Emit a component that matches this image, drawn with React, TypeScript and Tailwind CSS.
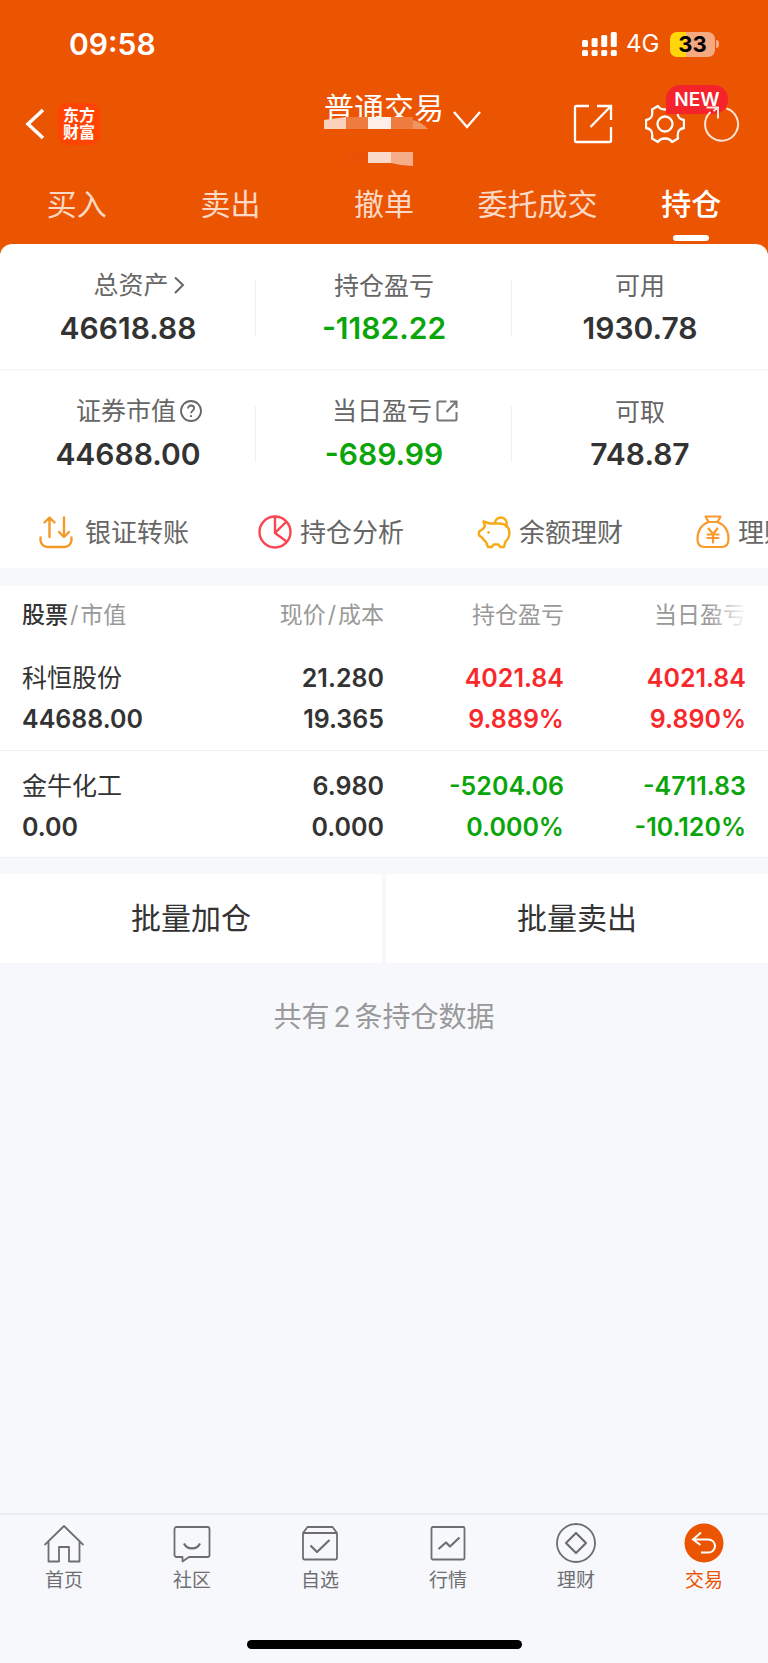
import type { ReactNode } from "react"
import { clsx } from "clsx"

type Tone = "up" | "down" | "plain"

const toneClass: Record<Tone, string> = {
  up: "text-[#f8282b]",
  down: "text-[#0aa50a]",
  plain: "text-[#333]",
}

const tabs = ["买入", "卖出", "撤单", "委托成交", "持仓"]

const summary: { label: string; value: string; tone: Tone; icon?: ReactNode }[][] = [
  [
    { label: "总资产", value: "46618.88", tone: "plain", icon: <ChevronRightIcon /> },
    { label: "持仓盈亏", value: "-1182.22", tone: "down" },
    { label: "可用", value: "1930.78", tone: "plain" },
  ],
  [
    { label: "证券市值", value: "44688.00", tone: "plain", icon: <HelpIcon /> },
    { label: "当日盈亏", value: "-689.99", tone: "down", icon: <SmallShareIcon /> },
    { label: "可取", value: "748.87", tone: "plain" },
  ],
]

const actions = [
  { label: "银证转账", icon: <TransferIcon />, gap: "gap-3" },
  { label: "持仓分析", icon: <PieIcon />, gap: "gap-2" },
  { label: "余额理财", icon: <PiggyIcon />, gap: "gap-2" },
  { label: "理财", icon: <MoneyBagIcon />, gap: "gap-2" },
]

const holdings: { name: string; market: string; cells: { top: string; bottom: string; tone: Tone }[] }[] = [
  {
    name: "科恒股份",
    market: "44688.00",
    cells: [
      { top: "21.280", bottom: "19.365", tone: "plain" },
      { top: "4021.84", bottom: "9.889%", tone: "up" },
      { top: "4021.84", bottom: "9.890%", tone: "up" },
    ],
  },
  {
    name: "金牛化工",
    market: "0.00",
    cells: [
      { top: "6.980", bottom: "0.000", tone: "plain" },
      { top: "-5204.06", bottom: "0.000%", tone: "down" },
      { top: "-4711.83", bottom: "-10.120%", tone: "down" },
    ],
  },
]

const bottomNav = [
  { label: "首页", icon: <HomeIcon /> },
  { label: "社区", icon: <CommunityIcon /> },
  { label: "自选", icon: <WatchlistIcon /> },
  { label: "行情", icon: <QuotesIcon /> },
  { label: "理财", icon: <WealthIcon /> },
  { label: "交易", icon: <TradeIcon />, active: true },
]

function ChevronRightIcon() {
  return (
    <svg className="h-5 w-3" viewBox="0 0 12 20" fill="none" stroke="#666" strokeWidth="2">
      <path d="M2 2.5l8 7.5-8 8" />
    </svg>
  )
}

function HelpIcon() {
  return (
    <svg className="size-[22px]" viewBox="0 0 22 22" fill="none" stroke="#666" strokeWidth="1.8">
      <circle cx="11" cy="11" r="10" />
      <path d="M8 8.6c0-1.9 1.3-3.1 3.1-3.1s3 1.2 3 2.8c0 2.1-3 2.5-3 5" />
      <path d="M11 15.3v1.7" strokeWidth="2" />
    </svg>
  )
}

function SmallShareIcon() {
  return (
    <svg className="size-[22px]" viewBox="0 0 22 22" fill="none" stroke="#777" strokeWidth="2">
      <path d="M10.5 1.5H3A1.5 1.5 0 0 0 1.5 3v16A1.5 1.5 0 0 0 3 20.5h16a1.5 1.5 0 0 0 1.5-1.5v-7" />
      <path d="M14 1.5h6.5V8M20.5 1.5L10.5 12" />
    </svg>
  )
}

function TransferIcon() {
  return (
    <svg className="size-[34px]" viewBox="0 0 34 34" fill="none" stroke="#f39a2b" strokeWidth="2.4" strokeLinecap="round" strokeLinejoin="round">
      <path d="M10.5 22V3M5.5 7.5l5-5 5 5M25 2.5v19M20 17l5 5 5-5" />
      <path d="M1.5 22.5v2.5a7 7 0 0 0 7 7h17a7 7 0 0 0 7-7v-2.5" />
    </svg>
  )
}

function PieIcon() {
  return (
    <svg className="size-[34px]" viewBox="0 0 34 34" fill="none" stroke="#fa4650" strokeWidth="2.4" strokeLinejoin="round">
      <circle cx="17" cy="17" r="15.5" />
      <path d="M17 1.5V18l11.5 8.5M17 18L28.5 6.5" />
    </svg>
  )
}

function PiggyIcon() {
  return (
    <svg className="size-[34px]" viewBox="0 0 34 34" fill="none" stroke="#f8aa14" strokeWidth="2.4" strokeLinejoin="round" strokeLinecap="round">
      <path d="M6.5 6.5L13 8.5h9c7 0 10.5 4 10.5 9.5 0 4-1.5 6.5-4 8.5l-1.5 5.5h-4l-1.5-2.5h-5L15 32h-4l-2-5c-2-1.5-3-3-4-4.5L2 20.5v-4l4-2.5 2-3z" />
      <path d="M18 7a6 6 0 1 1 11 4.5" />
      <circle cx="11.5" cy="17.5" r="1" fill="#f8aa14" strokeWidth="1" />
    </svg>
  )
}

function MoneyBagIcon() {
  return (
    <svg className="size-[34px]" viewBox="0 0 34 34" fill="none" stroke="#f89a2e" strokeWidth="2.2" strokeLinejoin="round" strokeLinecap="round">
      <path d="M9.5 1.5h15l-3 5.5h-9z" />
      <path d="M12.5 7C5 10 1.5 16 1.5 24c0 5.5 2 8 7 8h17c5 0 7-2.5 7-8 0-8-3.5-14-11-17" />
      <path d="M12.5 13.5l4.5 5.5 4.5-5.5M17 19v8.5M11.5 19.5h11M11.5 23h11" />
    </svg>
  )
}

function HomeIcon() {
  return (
    <svg className="size-10" viewBox="0 0 40 40" fill="none" stroke="#6e6e72" strokeWidth="1.8" strokeLinejoin="round">
      <path d="M.5 22L20 3l19.5 19M4.5 18.5V38.5H15V24h10v14.5h10.5v-20" />
    </svg>
  )
}

function CommunityIcon() {
  return (
    <svg className="size-10" viewBox="0 0 40 40" fill="none" stroke="#6e6e72" strokeWidth="1.8" strokeLinejoin="round">
      <path d="M4.5 4h31a2 2 0 0 1 2 2v26a2 2 0 0 1-2 2H17l-6.5 4.5V34h-6a2 2 0 0 1-2-2V6a2 2 0 0 1 2-2z" />
      <path d="M12 20.5c3 6.5 13 6.5 16 0" strokeWidth="2.2" />
    </svg>
  )
}

function WatchlistIcon() {
  return (
    <svg className="size-10" viewBox="0 0 40 40" fill="none" stroke="#6e6e72" strokeWidth="1.8" strokeLinejoin="round">
      <path d="M3 10l4.5-6h25L37 10M3 10h34v25a1.5 1.5 0 0 1-1.5 1.5h-31A1.5 1.5 0 0 1 3 35z" />
      <path d="M10.5 22.5l6.5 6.5 12.5-12" strokeWidth="2.2" />
    </svg>
  )
}

function QuotesIcon() {
  return (
    <svg className="size-10" viewBox="0 0 40 40" fill="none" stroke="#6e6e72" strokeWidth="1.8" strokeLinejoin="round">
      <rect x="3.5" y="4" width="33" height="32.5" rx="1.5" />
      <path d="M10.5 26l7.5-6.5 4 4 9.5-9" strokeWidth="2.2" />
    </svg>
  )
}

function WealthIcon() {
  return (
    <svg className="size-10" viewBox="0 0 40 40" fill="none" stroke="#6e6e72" strokeWidth="1.8" strokeLinejoin="round">
      <circle cx="20" cy="20" r="19" />
      <path d="M20 10l10 10-10 10-10-10z" strokeWidth="2.2" />
    </svg>
  )
}

function TradeIcon() {
  return (
    <svg className="size-10" viewBox="0 0 40 40" fill="none" stroke="#fff" strokeWidth="2">
      <circle cx="20" cy="20" r="19.5" fill="#eb5502" stroke="none" />
      <path d="M17 9.5L9 16.5l7.5 5.5M9 16.5h15.5a6.5 6.5 0 0 1 0 13H17" />
    </svg>
  )
}

function StatusBar() {
  return (
    <div className="flex h-[88px] items-center justify-between pr-[49px] pl-[69px]">
      <span className="text-[30px] leading-9 font-semibold">09:58</span>
      <div className="flex items-center">
        <svg className="h-6 w-9" viewBox="0 0 36 24" fill="#fff">
          <rect x="0" y="8" width="6" height="7" rx="1.5" />
          <rect x="9.6" y="6" width="6" height="9" rx="1.5" />
          <rect x="19.2" y="3" width="6" height="12" rx="1.5" />
          <rect x="28.8" y="0" width="6" height="15" rx="1.5" />
          <rect x="0" y="18" width="6" height="6" rx="1.5" />
          <rect x="9.6" y="18" width="6" height="6" rx="1.5" />
          <rect x="19.2" y="18" width="6" height="6" rx="1.5" />
          <rect x="28.8" y="18" width="6" height="6" rx="1.5" />
        </svg>
        <span className="ml-2 w-9 text-2xl">4G</span>
        <div className="ml-2 flex h-[25px] w-[45px] items-center justify-center rounded-[7px] bg-[linear-gradient(to_right,#ffd60a_35%,#f4a981_35%)] text-[22px] font-bold text-black">
          33
        </div>
        <span className="ml-px h-2 w-[3px] rounded-r-full bg-[#f4a981]" />
      </div>
    </div>
  )
}

function TitleBar() {
  return (
    <div className="grid h-[88px] grid-cols-[1fr_auto_1fr]">
      <div className="flex h-[72px] items-center pl-[25px]">
        <button aria-label="返回">
          <svg className="h-8 w-5" viewBox="0 0 20 32" fill="none" stroke="#fff" strokeWidth="3.5">
            <path d="M18 2L3 16l15 14" />
          </svg>
        </button>
        <div className="ml-[13px] flex size-[42px] flex-col items-center justify-center rounded-[9px] bg-[#ff4302] text-[16px] leading-[17px] font-bold">
          <span>东方</span>
          <span>财富</span>
        </div>
      </div>
      <button className="relative flex h-10 items-center text-[30px] leading-10">
        普通交易
        {/* account number is masked */}
        <svg className="absolute top-[29px] left-0 h-[49px] w-[106px]" viewBox="0 0 106 49">
          <path d="M0 3L22 0v12H0z" fill="#f9d1bd" />
          <path d="M22 0h22v12H22z" fill="#ef7b3e" />
          <path d="M44 0h23v12H44z" fill="#fef0e9" />
          <path d="M67 0h22v12H67z" fill="#ef7d40" />
          <path d="M89 3q10 3 15 9H89z" fill="#f09562" />
          <path d="M22 35h22v11H22z" fill="#ea5303" />
          <path d="M44 35h23v11H44z" fill="#fadacb" />
          <path d="M67 35h22v14q-11 0-22-3z" fill="#f5ae88" />
        </svg>
        <svg className="absolute top-[22px] left-full ml-2 h-5 w-[30px]" viewBox="0 0 30 20" fill="none" stroke="#fff" strokeWidth="2.4">
          <path d="M2 2l13 15L28 2" />
        </svg>
      </button>
      <div className="flex h-[72px] items-center justify-end pr-[26px]">
        <button aria-label="分享">
          <svg className="size-10" viewBox="0 0 40 40" fill="none" stroke="#fff" strokeWidth="2.3">
            <path d="M16 2H3.5A1.5 1.5 0 0 0 2 3.5v33A1.5 1.5 0 0 0 3.5 38h33a1.5 1.5 0 0 0 1.5-1.5V23" />
            <path d="M24 2h14v14M38 2L17.5 23" />
          </svg>
        </button>
        <button aria-label="设置" className="relative ml-8">
          <svg className="size-10" viewBox="0 0 40 40" fill="none" stroke="#fff" strokeWidth="2.3" strokeLinejoin="round">
            <path d="M13 2Q15 5.5 20 5.5T27 2L33 5.5Q32 12 34.5 14Q36 15.5 39 16V24Q36 24.5 34.5 26Q32 28 33 34.5L27 38Q25 34.5 20 34.5T13 38L7 34.5Q8 28 5.5 26Q4 24.5 1 24V16Q4 15.5 5.5 14Q8 12 7 5.5Z" />
            <circle cx="20" cy="20" r="7.5" />
          </svg>
          <span className="absolute -top-[19px] left-[21px] h-[29px] w-[62px] rounded-t-[14px] rounded-br-[14px] bg-[#f5232c] text-center text-[19px] leading-[29px] font-semibold">
            NEW
          </span>
        </button>
        <button aria-label="刷新" className="relative ml-[17px]">
          <svg className="size-10" viewBox="0 0 40 40" fill="none" stroke="#fde6da" strokeWidth="2">
            <path d="M24.5 4.5A16.5 16.5 0 1 1 8.5 8" />
            <path d="M4.5 3.5H16v11M16 3.5L11.5 7" />
          </svg>
        </button>
      </div>
    </div>
  )
}

export default function App() {
  return (
    <div className="flex min-h-screen flex-col bg-[#f7f8fb] font-['Inter','Noto_Sans_CJK_SC',sans-serif] text-[#333]">
      <header className="bg-[#eb5502] text-white">
        <StatusBar />
        <TitleBar />
        <nav className="grid h-[68px] grid-cols-5">
          {tabs.map((tab) => {
            const active = tab === "持仓"
            return (
              <button
                key={tab}
                className={clsx(
                  "flex flex-col items-center justify-between pt-2 pb-[3px] text-[30px] leading-10",
                  active ? "font-medium text-white" : "text-[#fbd9c6]",
                )}
              >
                {tab}
                {active && <span className="h-1.5 w-9 rounded-full bg-white" />}
              </button>
            )
          })}
        </nav>
      </header>

      <main className="flex-1">
        <div className="bg-[#eb5502]">
          <section className="rounded-t-xl bg-white">
            {summary.map((row, i) => (
              <div key={i} className={clsx("grid grid-cols-3", i === 0 ? "h-[127px] border-b-2 border-[#f7f7f8] pt-6" : "h-[126px] pt-[23px]")}>
                {row.map((item, j) => (
                  <div key={item.label} className="relative flex flex-col items-center">
                    <div className={clsx("flex h-9 items-center gap-1 text-[25px] leading-9 text-[#666]", item.icon && "pb-0.5 pl-[22px]")}>
                      {item.label}
                      {item.icon}
                    </div>
                    <div className={clsx("mt-1.5 text-[30px] leading-9 font-semibold", toneClass[item.tone])}>{item.value}</div>
                    {j < 2 && <span className="absolute top-3 right-0 h-14 w-px bg-[#f0f0f2]" />}
                  </div>
                ))}
              </div>
            ))}
            <div className="flex h-[71px] overflow-hidden">
              {actions.map((action) => (
                <button
                  key={action.label}
                  className={clsx("flex h-[70px] w-[219px] shrink-0 items-center pl-[39px] text-[26px] whitespace-nowrap text-[#666]", action.gap)}
                >
                  {action.icon}
                  {action.label}
                </button>
              ))}
            </div>
          </section>
        </div>

        <section className="mt-[18px] bg-white">
          <table className="w-full table-fixed">
            <thead>
              <tr className="h-[57px] text-[23px] leading-8 text-[#999]">
                <th className="w-[28%] pl-[22px] text-left font-normal">
                  <span className="font-medium text-[#333]">股票</span>
                  <span className="mx-0.5">/</span>市值
                </th>
                <th className="w-[22%] text-right font-normal">
                  现价<span className="mx-0.5">/</span>成本
                </th>
                <th className="pr-3 text-right font-normal">持仓盈亏</th>
                <th className="relative pr-[22px] text-right font-normal">
                  当日盈亏
                  <span className="absolute inset-y-0 right-5 w-10 bg-linear-to-r from-transparent to-white" />
                </th>
              </tr>
            </thead>
            <tbody className="text-[25px] leading-[41px] font-semibold">
              {holdings.map((h) => (
                <tr key={h.name} className="h-[107px] border-b border-[#f0f0f2]">
                  <td className="pt-1.5 pl-[22px]">
                    <div className="font-normal">{h.name}</div>
                    <div>{h.market}</div>
                  </td>
                  {h.cells.map((cell, i) => (
                    <td key={i} className={clsx("pt-1.5 text-right", i === 1 && "pr-3", i === 2 && "pr-[22px]", toneClass[cell.tone])}>
                      <div>{cell.top}</div>
                      <div>{cell.bottom}</div>
                    </td>
                  ))}
                </tr>
              ))}
            </tbody>
          </table>
        </section>

        <div className="mt-4 grid grid-cols-2 gap-1">
          <button className="h-[89px] bg-white text-[30px]">批量加仓</button>
          <button className="h-[89px] bg-white text-[30px]">批量卖出</button>
        </div>
        <p className="mt-9 text-center text-[28px] leading-9 text-[#999]">
          共有<span className="mx-1">2</span>条持仓数据
        </p>
      </main>

      <footer className="border-t-2 border-[#ebecf3]">
        <nav className="grid grid-cols-6 pt-2">
          {bottomNav.map((item) => (
            <a
              key={item.label}
              href="#"
              className={clsx("flex flex-col items-center gap-1 text-[19px] leading-7", item.active ? "text-[#eb5502]" : "text-[#6e6e72]")}
            >
              {item.icon}
              {item.label}
            </a>
          ))}
        </nav>
        <div className="mx-auto mt-[45px] mb-3.5 h-[9px] w-[275px] rounded-full bg-black" />
      </footer>
    </div>
  )
}
